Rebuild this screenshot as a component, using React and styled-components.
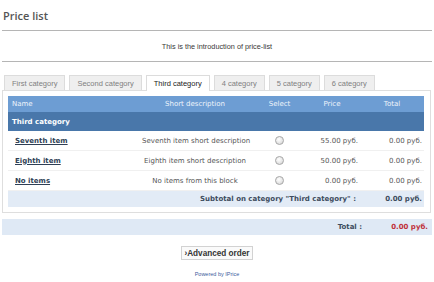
import React from "react";
import styled, { createGlobalStyle } from "styled-components";

const GlobalStyle = createGlobalStyle`
  html, body {
    margin: 0;
    padding: 0;
    background: #fff;
  }
`;

const Page = styled.div`
  width: 434px;
  padding: 0 2px;
  box-sizing: border-box;
  font-family: "Liberation Sans", Arial, sans-serif;
  color: #333;
`;

const Title = styled.h1`
  margin: 0;
  height: 30px;
  padding-left: 1px;
  display: flex;
  align-items: center;
  font-family: "Open Sans", sans-serif;
  font-weight: 600;
  font-size: 11px;
  color: #555;
  border-bottom: 1px solid #b5b5b5;
`;

const Intro = styled.div`
  height: 30px;
  display: flex;
  align-items: center;
  justify-content: center;
  font-size: 7.3px;
  color: #383838;
  border-bottom: 1px solid #b5b5b5;
`;

const Tabs = styled.ul`
  list-style: none;
  margin: 13px 0 0;
  padding: 0 0 0 2px;
  display: flex;
  gap: 4px;
  position: relative;
  z-index: 1;
`;

const Tab = styled.li`
  box-sizing: border-box;
  padding: 0 7px;
  display: flex;
  align-items: center;
  font-size: 7.5px;
  border: 1px solid #dcdcdc;
  border-bottom: none;
  background: ${p => (p.$active ? "#fff" : "#efefef")};
  color: ${p => (p.$active ? "#222" : "#808080")};
  margin-bottom: ${p => (p.$active ? "-1px" : "0")};
  height: ${p => (p.$active ? "16px" : "15px")};
`;

const Panel = styled.div`
  width: 429px;
  box-sizing: border-box;
  border: 1px solid #dedede;
  padding: 5px;
`;

const Table = styled.table`
  width: 416px;
  border-collapse: collapse;
  table-layout: fixed;
  font-family: "DejaVu Sans", Verdana, sans-serif;
  font-size: 7px;
  color: #555;
`;

const HeadCell = styled.th`
  height: 16px;
  padding: 0 4px;
  background: #6d9dd3;
  color: #eef4fb;
  font-weight: normal;
  text-align: ${p => p.$align || "center"};
`;

const CategoryCell = styled.td`
  height: 19px;
  padding: 0 4px;
  background: #4977aa;
  color: #fff;
  font-weight: bold;
`;

const Cell = styled.td`
  height: 19px;
  padding: 0 ${p => (p.$align === "right" ? "2px" : "7px")};
  border-bottom: 1px solid #f0f0f0;
  text-align: ${p => p.$align || "left"};
  white-space: nowrap;
`;

const ItemLink = styled.a`
  color: #2f3f55;
  font-weight: bold;
  text-decoration: underline;
`;

const Radio = styled.span`
  display: inline-block;
  width: 7px;
  height: 7px;
  border-radius: 50%;
  border: 1px solid #a9a9a9;
  background: radial-gradient(circle at 40% 35%, #fff 0%, #e6e6e6 55%, #cfcfcf 100%);
  vertical-align: middle;
`;

const SubtotalCell = styled.td`
  height: 16px;
  padding: 0 ${p => (p.$value ? "2px" : "4px")};
  background: #e2ebf6;
  border-top: 1px solid #fff;
  text-align: right;
  font-weight: bold;
  color: #3d4c5e;
`;

const TotalBar = styled.div`
  margin-top: 6px;
  width: 430px;
  height: 16px;
  background: #dfe9f5;
  display: grid;
  grid-template-columns: 1fr 65px;
  align-items: center;
  font-family: "DejaVu Sans", Verdana, sans-serif;
  font-size: 7px;
  font-weight: bold;
`;

const TotalLabel = styled.span`
  text-align: right;
  padding-right: 5px;
  color: #3d4c5e;
`;

const TotalValue = styled.span`
  text-align: right;
  padding-right: 4px;
  color: #c0303a;
`;

const ButtonRow = styled.div`
  margin-top: 11px;
  display: flex;
  justify-content: center;
`;

const OrderButton = styled.button`
  height: 14px;
  padding: 0 2px;
  border: 1px solid #d2d2d2;
  background: #fafafa;
  font-family: "Liberation Sans", Arial, sans-serif;
  font-weight: bold;
  font-size: 8.2px;
  color: #333;
  display: flex;
  align-items: center;
`;

const Powered = styled.div`
  margin-top: 11px;
  text-align: center;
  font-size: 5.5px;

  a {
    color: #3b5b9c;
    text-decoration: underline;
  }
`;

const tabs = ["First category", "Second category", "Third category", "4 category", "5 category", "6 category"];

const items = [
  { name: "Seventh item", desc: "Seventh item short description", price: "55.00 руб.", total: "0.00 руб." },
  { name: "Eighth item", desc: "Eighth item short description", price: "50.00 руб.", total: "0.00 руб." },
  { name: "No items", desc: "No items from this block", price: "0.00 руб.", total: "0.00 руб." }
];

const App = () => (
  <Page>
    <GlobalStyle />
    <Title>Price list</Title>
    <Intro>This is the introduction of price-list</Intro>

    <Tabs>
      {tabs.map(t => (
        <Tab key={t} $active={t === "Third category"}>
          {t}
        </Tab>
      ))}
    </Tabs>

    <Panel>
      <Table>
        <colgroup>
          <col style={{ width: 127 }} />
          <col style={{ width: 120 }} />
          <col style={{ width: 49 }} />
          <col style={{ width: 56 }} />
          <col style={{ width: 64 }} />
        </colgroup>
        <thead>
          <tr>
            <HeadCell $align="left">Name</HeadCell>
            <HeadCell>Short description</HeadCell>
            <HeadCell>Select</HeadCell>
            <HeadCell>Price</HeadCell>
            <HeadCell>Total</HeadCell>
          </tr>
        </thead>
        <tbody>
          <tr>
            <CategoryCell colSpan={5}>Third category</CategoryCell>
          </tr>
          {items.map(item => (
            <tr key={item.name}>
              <Cell>
                <ItemLink href="#">{item.name}</ItemLink>
              </Cell>
              <Cell $align="center">{item.desc}</Cell>
              <Cell $align="center">
                <Radio />
              </Cell>
              <Cell $align="right">{item.price}</Cell>
              <Cell $align="right">{item.total}</Cell>
            </tr>
          ))}
          <tr>
            <SubtotalCell colSpan={4}>Subtotal on category "Third category" :</SubtotalCell>
            <SubtotalCell $value>0.00 руб.</SubtotalCell>
          </tr>
        </tbody>
      </Table>
    </Panel>

    <TotalBar>
      <TotalLabel>Total :</TotalLabel>
      <TotalValue>0.00 руб.</TotalValue>
    </TotalBar>

    <ButtonRow>
      <OrderButton>›Advanced order</OrderButton>
    </ButtonRow>

    <Powered>
      <a href="#">Powered by IPrice</a>
    </Powered>
  </Page>
);

export default App;
